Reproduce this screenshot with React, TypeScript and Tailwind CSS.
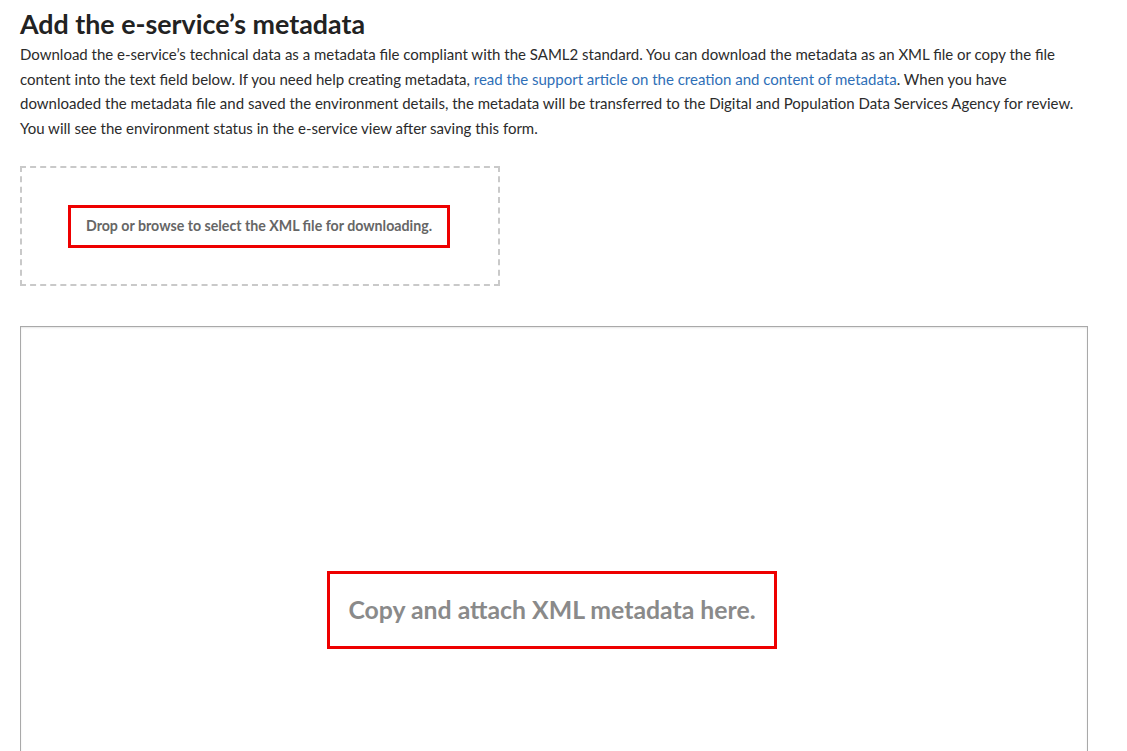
const App = () => {
  return (
    <div className="bg-white min-h-screen font-['Lato','Liberation_Sans',sans-serif] text-[#2b2b2b]">
      <div className="w-[1087px] pl-5 pt-[8px]">
        <h1 className="text-[26.8px] leading-[33px] font-bold text-[#222]">
          Add the e-service’s metadata
        </h1>
        <p className="mt-[1px] text-[15px] leading-[24.5px] whitespace-nowrap">
          Download the e-service’s technical data as a metadata file compliant with the SAML2 standard. You can download the metadata as an XML file or copy the file
          <br />
          content into the text field below. If you need help creating metadata,{" "}
          <a href="#" className="text-[#2f6fb7]">
            read the support article on the creation and content of metadata
          </a>
          . When you have
          <br />
          downloaded the metadata file and saved the environment details, the metadata will be transferred to the Digital and Population Data Services Agency for review.
          <br />
          You will see the environment status in the e-service view after saving this form.
        </p>

        <div className="mt-[26px] w-[480px] h-[120px] border-2 border-dashed border-[#c9c9c9] flex items-center justify-center">
          <div className="w-[382px] h-[43px] mr-[2px] border-[3px] border-[#ee0000] flex items-center justify-center">
            <span className="text-[14.2px] font-bold text-[#666]">
              Drop or browse to select the XML file for downloading.
            </span>
          </div>
        </div>

        <div className="mt-[40px] w-[1068px] h-[568px] border border-[#a9a9a9] shadow-[inset_0_1px_2px_rgba(0,0,0,0.1)] flex items-center justify-center">
          <div className="w-[450px] h-[78px] mr-[4px] border-[3px] border-[#ee0000] flex items-center justify-center">
            <span className="text-[24.8px] font-bold text-[#8a8a8a]">
              Copy and attach XML metadata here.
            </span>
          </div>
        </div>
      </div>
    </div>
  );
};

export default App;
